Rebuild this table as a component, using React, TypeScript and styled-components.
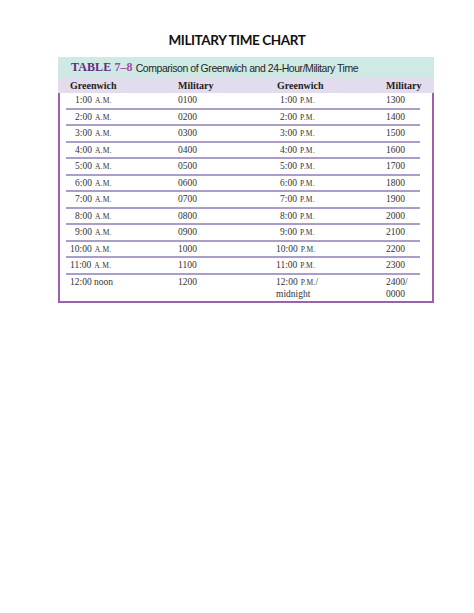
import React from 'react';
import styled, { createGlobalStyle } from 'styled-components';

const GlobalStyle = createGlobalStyle`
    html, body {
        margin: 0;
        padding: 0;
        background: #ffffff;
    }
`

const Page = styled.div`
    width: 474px;
    min-height: 613px;
    padding-top: 31px;
    box-sizing: border-box;
    background: #ffffff;
`

const Title = styled.h1`
    margin: 0;
    height: 18px;
    line-height: 18px;
    text-align: center;
    font-family: Lato, "Liberation Sans", sans-serif;
    font-weight: 700;
    font-size: 13.5px;
    letter-spacing: -0.4px;
    color: #111111;
`

const TableBox = styled.div`
    width: 376px;
    margin: 8px 0 0 58px;
`

const Caption = styled.div`
    height: 21px;
    display: flex;
    align-items: center;
    gap: 3px;
    padding-left: 13px;
    background: #cfeae5;
`

const TableLabel = styled.span`
    font-family: "Liberation Serif", serif;
    font-size: 12px;
    font-weight: 600;
    letter-spacing: 0.1px;
    color: #652a82;
`

const TableNumber = styled.span`
    color: #a24aa6;
`

const CaptionText = styled.span`
    font-family: "Liberation Sans", sans-serif;
    font-size: 10.5px;
    letter-spacing: -0.45px;
    color: #262626;
`

const Columns = styled.div`
    display: grid;
    grid-template-columns: 108px 98px 110px 1fr;
`

const HeadRow = styled(Columns)`
    height: 15px;
    align-items: center;
    padding-left: 12px;
    background: #e3dcee;
`

const HeadCell = styled.span<{ $shift?: number }>`
    padding-left: ${p => p.$shift || 0}px;
    font-family: "Liberation Serif", serif;
    font-weight: 700;
    font-size: 10px;
    color: #222222;
`

const Body = styled.div`
    border: 2px solid #9a62ad;
    border-top: none;
    padding-bottom: 1px;
`

const Row = styled(Columns)<{ $last?: boolean }>`
    margin: 0 12px 0 6px;
    padding-left: 4px;
    min-height: 14.5px;
    align-items: ${p => (p.$last ? 'start' : 'center')};
    padding-top: ${p => (p.$last ? '1px' : '0')};
    border-bottom: ${p => (p.$last ? 'none' : '2px solid #ab9dca')};
`

const Cell = styled.span<{ $indent?: number }>`
    padding-left: ${p => p.$indent || 0}px;
    font-family: "Liberation Serif", serif;
    font-size: 9.5px;
    line-height: 12px;
    color: #333333;
`

const Meridiem = styled.span`
    margin-left: 3px;
    font-size: 7.5px;
    line-height: 0;
    letter-spacing: 0.3px;
`

type Entry = { am: string; mil: string; pm: string; milPm: string };

const entries: Entry[] = [
    { am: '1', mil: '0100', pm: '1', milPm: '1300' },
    { am: '2', mil: '0200', pm: '2', milPm: '1400' },
    { am: '3', mil: '0300', pm: '3', milPm: '1500' },
    { am: '4', mil: '0400', pm: '4', milPm: '1600' },
    { am: '5', mil: '0500', pm: '5', milPm: '1700' },
    { am: '6', mil: '0600', pm: '6', milPm: '1800' },
    { am: '7', mil: '0700', pm: '7', milPm: '1900' },
    { am: '8', mil: '0800', pm: '8', milPm: '2000' },
    { am: '9', mil: '0900', pm: '9', milPm: '2100' },
    { am: '10', mil: '1000', pm: '10', milPm: '2200' },
    { am: '11', mil: '1100', pm: '11', milPm: '2300' },
];

export default function App(): JSX.Element {
    return (
        <Page>
            <GlobalStyle />
            <Title>MILITARY TIME CHART</Title>
            <TableBox>
                <Caption>
                    <TableLabel>TABLE <TableNumber>7–8</TableNumber></TableLabel>
                    <CaptionText>Comparison of Greenwich and 24-Hour/Military Time</CaptionText>
                </Caption>
                <HeadRow>
                    <HeadCell>Greenwich</HeadCell>
                    <HeadCell>Military</HeadCell>
                    <HeadCell $shift={1}>Greenwich</HeadCell>
                    <HeadCell>Military</HeadCell>
                </HeadRow>
                <Body>
                    {entries.map(e => (
                        <Row key={e.am}>
                            <Cell $indent={e.am.length === 1 ? 5 : 0}>
                                {e.am}:00<Meridiem>A.M.</Meridiem>
                            </Cell>
                            <Cell>{e.mil}</Cell>
                            <Cell $indent={e.pm.length === 1 ? 4 : 0}>
                                {e.pm}:00<Meridiem>P.M.</Meridiem>
                            </Cell>
                            <Cell>{e.milPm}</Cell>
                        </Row>
                    ))}
                    <Row $last>
                        <Cell>12:00 noon</Cell>
                        <Cell>1200</Cell>
                        <Cell>
                            12:00<Meridiem>P.M.</Meridiem>/<br />midnight
                        </Cell>
                        <Cell>
                            2400/<br />0000
                        </Cell>
                    </Row>
                </Body>
            </TableBox>
        </Page>
    )
}
